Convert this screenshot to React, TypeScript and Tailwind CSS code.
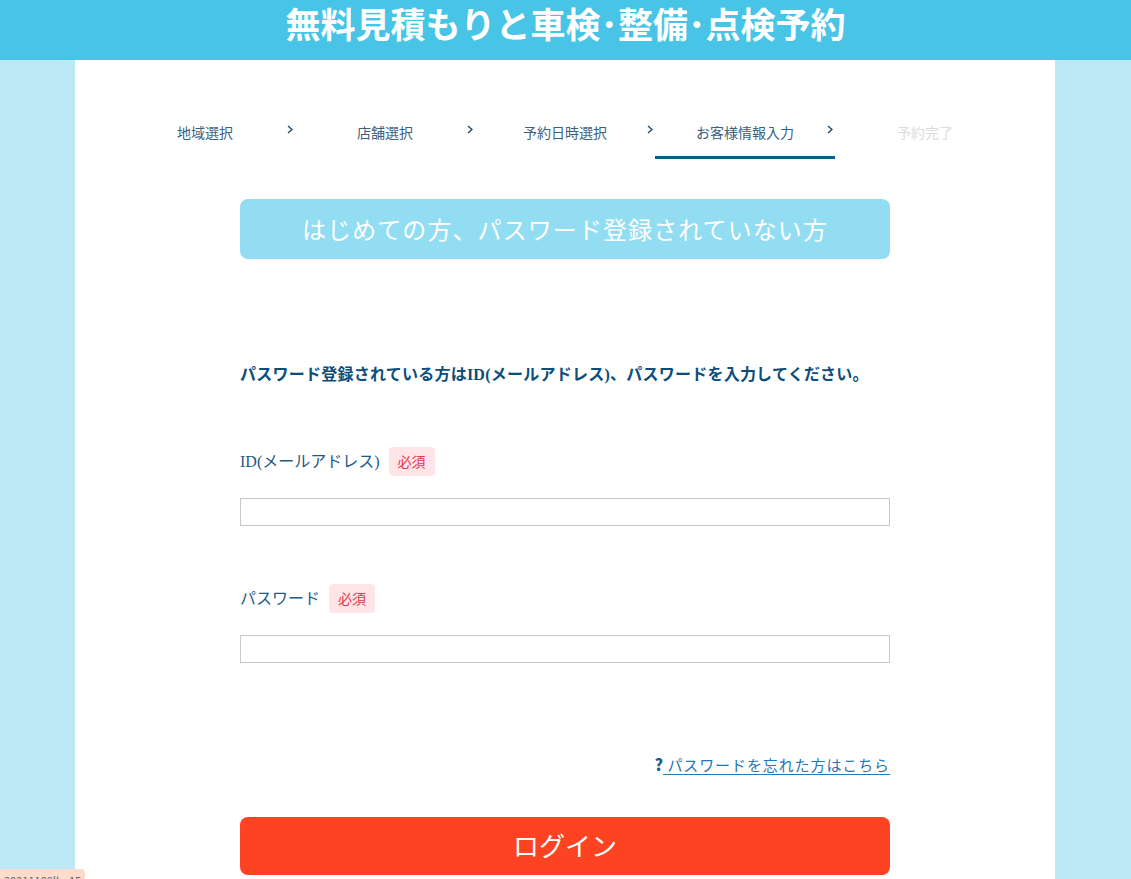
import React from "react";

const steps = [
  { label: "地域選択", state: "done" },
  { label: "店舗選択", state: "done" },
  { label: "予約日時選択", state: "done" },
  { label: "お客様情報入力", state: "current" },
  { label: "予約完了", state: "todo" },
];

const jp = '"Noto Sans CJK JP", "Noto Sans", sans-serif';
const mixed = '"Liberation Serif", "Noto Sans CJK JP", serif';

const Chevron = () => (
  <svg width="6" height="9" viewBox="0 0 6 9" className="absolute right-[2px] top-[11px]">
    <polyline points="1,1 5,4.5 1,8" fill="none" stroke="#1e4a68" strokeWidth="1.4" />
  </svg>
);

const StepBar = () => (
  <ol className="mx-auto flex w-[900px]">
    {steps.map((s, i) => (
      <li
        key={s.label}
        className={
          "relative w-[180px] pt-[8px] pb-[14px] text-center text-[14px] leading-[20px] border-b-[3px] " +
          (s.state === "current" ? "border-[#0d5a8c]" : "border-transparent")
        }
      >
        <span className={s.state === "todo" ? "text-[#dcdcdc]" : "text-[#3a6180]"}>
          {s.label}
        </span>
        {i < steps.length - 1 && <Chevron />}
      </li>
    ))}
  </ol>
);

const Required = () => (
  <span className="inline-flex h-[29px] items-center rounded-[4px] bg-[#ffe4e8] px-[9px] text-[14px] text-[#e5364c]">
    必須
  </span>
);

const Field = ({ label, type }: { label: string; type: string }) => (
  <div>
    <div className="flex items-center gap-[9px]">
      <span className="text-[16px] leading-[22px] text-[#1d5a86]" style={{ fontFamily: mixed }}>
        {label}
      </span>
      <Required />
    </div>
    <input
      type={type}
      className="mt-[22px] block h-[28px] w-full border border-[#c8c8c8] bg-white px-2 outline-none"
    />
  </div>
);

export default function App() {
  return (
    <div className="min-h-[879px] bg-[#bce9f5]" style={{ fontFamily: jp }}>
      <header className="flex h-[60px] items-center justify-center bg-[#48c4e6] pb-[14px]">
        <h1 className="text-[35px] font-bold leading-[40px] text-white">
          無料見積もりと車検･整備･点検予約
        </h1>
      </header>

      <main className="ml-[75px] w-[980px] bg-white pt-[54px] pb-[60px]">
        <StepBar />

        <div className="mx-auto w-[650px]">
          <div className="mt-[40px] flex h-[60px] items-center justify-center rounded-[8px] bg-[#93ddf2] text-[24px] tracking-[0.045em] text-white">
            はじめての方、パスワード登録されていない方
          </div>

          <p
            className="mt-[105px] text-[16px] font-bold leading-[22px] tracking-[0.015em] text-[#0c4d7a]"
            style={{ fontFamily: mixed }}
          >
            パスワード登録されている方はID(メールアドレス)、パスワードを入力してください。
          </p>

          <div className="mt-[61px]">
            <Field label="ID(メールアドレス)" type="email" />
          </div>
          <div className="mt-[58px]">
            <Field label="パスワード" type="password" />
          </div>

          <div className="mt-[91px] text-right text-[15px] leading-[20px]">
            <a href="#" className="text-[#2478b8]">
              <span className="text-[16px] font-black text-[#1a5e96]">?</span>
              <span className="underline underline-offset-[3px] tracking-[0.06em]">
                {"\u00a0"}パスワードを忘れた方はこちら
              </span>
            </a>
          </div>

          <button
            type="button"
            className="mt-[42px] flex h-[58px] w-full items-center justify-center rounded-[8px] bg-[#fe4323] pb-[4px] text-[26px] text-white"
          >
            ログイン
          </button>
        </div>
      </main>

      <div className="fixed left-0 top-[869px] rounded-tr-[4px] bg-[#fddccb] px-[4px] pt-[3px] text-[11px] leading-[16px] text-[#666]">
        20211108lb_15
      </div>
    </div>
  );
}
